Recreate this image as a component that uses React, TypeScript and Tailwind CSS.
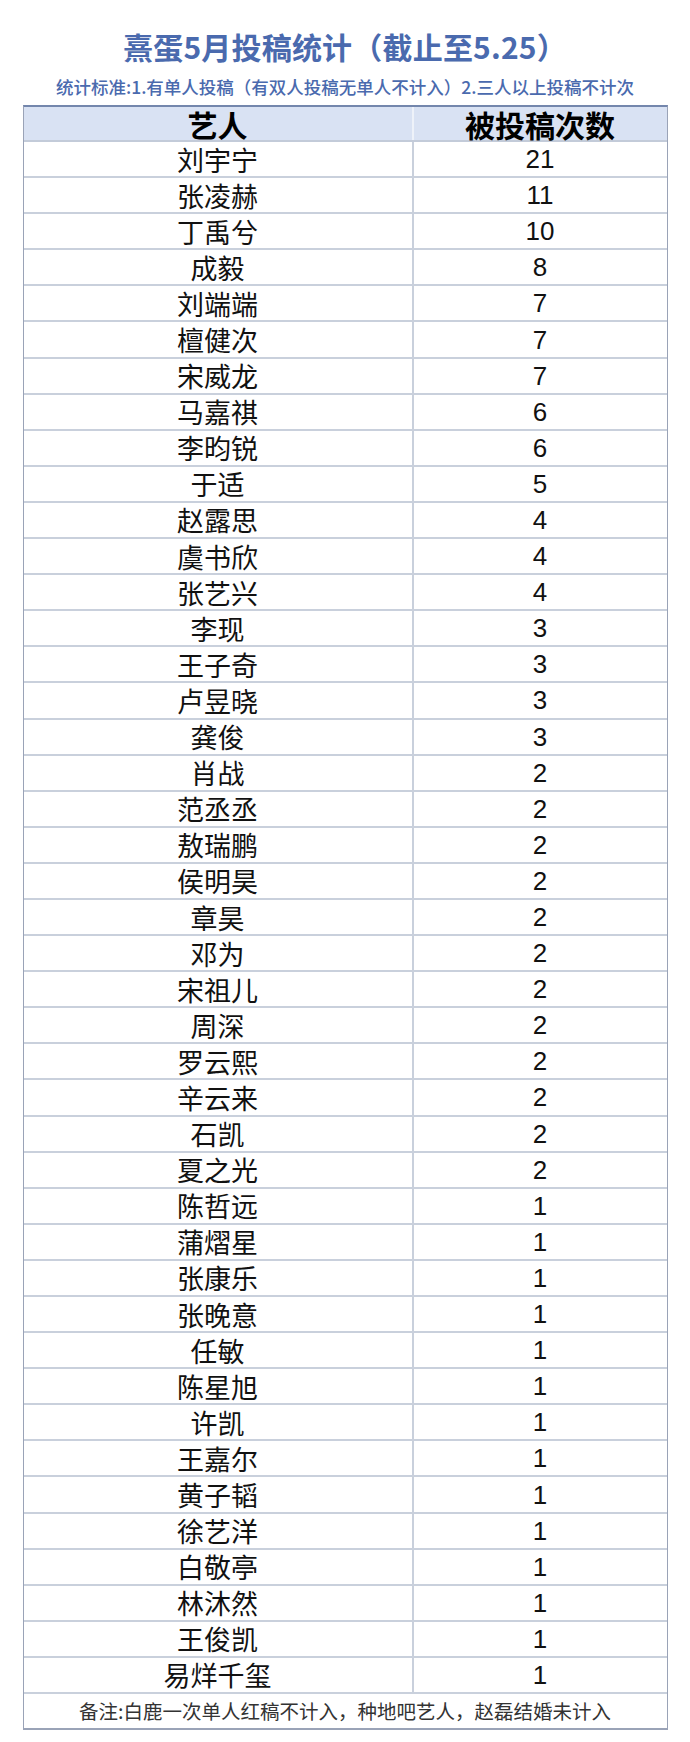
import React from 'react';

const rows: [string, number][] = [
  ['刘宇宁', 21], ['张凌赫', 11], ['丁禹兮', 10], ['成毅', 8], ['刘端端', 7],
  ['檀健次', 7], ['宋威龙', 7], ['马嘉祺', 6], ['李昀锐', 6], ['于适', 5],
  ['赵露思', 4], ['虞书欣', 4], ['张艺兴', 4], ['李现', 3], ['王子奇', 3],
  ['卢昱晓', 3], ['龚俊', 3], ['肖战', 2], ['范丞丞', 2], ['敖瑞鹏', 2],
  ['侯明昊', 2], ['章昊', 2], ['邓为', 2], ['宋祖儿', 2], ['周深', 2],
  ['罗云熙', 2], ['辛云来', 2], ['石凯', 2], ['夏之光', 2], ['陈哲远', 1],
  ['蒲熠星', 1], ['张康乐', 1], ['张晚意', 1], ['任敏', 1], ['陈星旭', 1],
  ['许凯', 1], ['王嘉尔', 1], ['黄子韬', 1], ['徐艺洋', 1], ['白敬亭', 1],
  ['林沐然', 1], ['王俊凯', 1], ['易烊千玺', 1],
];

const cjk = "font-['Noto_Sans_CJK_SC',sans-serif]";

export default function App() {
  return (
    <div className="w-[690px] h-[1742px] bg-white flex flex-col items-center">
      <h1 className={`${cjk} mt-[29px] h-[34px] text-[30px] leading-[34px] font-bold text-[#4a6aae] tracking-[0.2px]`}>
        熹蛋5月投稿统计（截止至5.25）
      </h1>
      <p className={`${cjk} mt-[8px] h-[32px] text-[17.5px] leading-[32px] font-medium text-[#4a6aae] tracking-[0px]`}>
        统计标准:1.有单人投稿（有双人投稿无单人不计入）2.三人以上投稿不计次
      </p>
      <div className="w-[645px] mt-[2px] border border-b-2 border-t-[2px] border-[#9aa3b7] border-t-[#7386ac] flex flex-col">
        <div className="grid grid-cols-[390px_1fr] h-[35px] bg-[#d9e2f3] border-b-2 border-[#c3cbd9]">
          <div className={`${cjk} flex items-center justify-center text-[30px] leading-none font-bold text-black border-r-2 border-[#eef2f9]`}>艺人</div>
          <div className={`${cjk} flex items-center justify-center text-[30px] leading-none font-bold text-black`}>被投稿次数</div>
        </div>
        {rows.map(([name, n]) => (
          <div key={name} className="grid grid-cols-[390px_1fr] h-[36.1px] border-b-2 border-[#c9d0dc]">
            <div className={`${cjk} flex items-center justify-center text-[27px] leading-none text-[#111] border-r-2 border-[#c9d0dc]`}>{name}</div>
            <div className="flex items-center justify-center text-[26px] leading-none text-[#111] font-['Liberation_Sans',Arial,sans-serif]">{n}</div>
          </div>
        ))}
        <div className={`${cjk} h-[34px] flex items-center justify-center text-[19.5px] leading-none text-[#333]`}>
          备注:白鹿一次单人红稿不计入，种地吧艺人，赵磊结婚未计入
        </div>
      </div>
    </div>
  );
}
